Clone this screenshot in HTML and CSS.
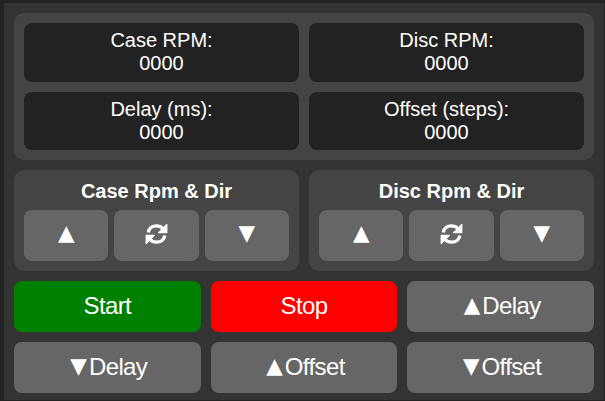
FILE: index.html
```html
<!DOCTYPE html>
<html lang="en">
<head>
<meta charset="utf-8">
<title>Controls</title>
<link rel="stylesheet" href="styles.css">
</head>
<body>
<svg width="0" height="0" class="defs"><symbol id="sync" viewBox="0 0 24 23" preserveAspectRatio="none"><path d="M3.4 10C4 5.6 7.6 3 12 3c2.7 0 5 1 6.8 2.9" fill="none" stroke="#fff" stroke-width="3.6"/><path d="M22.8 1.5v8.7H14.2z" stroke="#fff" stroke-width="1.2" stroke-linejoin="round"/><path d="M20.6 13c-.6 4.4-4.2 7-8.6 7-2.7 0-5-1-6.8-2.9" fill="none" stroke="#fff" stroke-width="3.6"/><path d="M1.2 21.5v-8.7H9.8z" stroke="#fff" stroke-width="1.2" stroke-linejoin="round"/></symbol></svg>
<main class="panel">
  <section class="status">
    <div class="readout">Case RPM:<br>0000</div>
    <div class="readout">Disc RPM:<br>0000</div>
    <div class="readout">Delay (ms):<br>0000</div>
    <div class="readout">Offset (steps):<br>0000</div>
  </section>
  <section class="groups">
    <div class="group">
      <h2>Case Rpm &amp; Dir</h2>
      <div class="group-buttons">
        <button><span class="arrow">▲</span></button>
        <button aria-label="Reverse"><svg class="icon"><use href="#sync"/></svg></button>
        <button><span class="arrow">▼</span></button>
      </div>
    </div>
    <div class="group">
      <h2>Disc Rpm &amp; Dir</h2>
      <div class="group-buttons">
        <button><span class="arrow">▲</span></button>
        <button aria-label="Reverse"><svg class="icon"><use href="#sync"/></svg></button>
        <button><span class="arrow">▼</span></button>
      </div>
    </div>
  </section>
  <section class="actions">
    <button class="start">Start</button>
    <button class="stop">Stop</button>
    <button class="step"><span class="arrow">▲</span>Delay</button>
    <button class="step"><span class="arrow">▼</span>Delay</button>
    <button class="step"><span class="arrow">▲</span>Offset</button>
    <button class="step"><span class="arrow">▼</span>Offset</button>
  </section>
</main>
</body>
</html>
```
FILE: styles.css
```css
* { box-sizing: border-box; }
body {
  margin: 0;
  padding: 3px 1px 0 4px;
  height: 401px;
  overflow: hidden;
  background: #222;
  color: #fff;
  font: 20px/23px "Liberation Sans", Arial, sans-serif;
}
.defs { position: absolute; }
.panel {
  display: flex;
  flex-direction: column;
  gap: 10px;
  height: 397px;
  padding: 10px;
  background: #333;
}
.status {
  display: grid;
  grid-template-columns: 1fr 1fr;
  grid-template-rows: 59px 58px;
  gap: 10px;
  padding: 10px;
  border-radius: 10px;
  background: #444;
}
.readout {
  padding-top: 6px;
  border-radius: 8px;
  background: #222;
  text-align: center;
}
.groups {
  display: grid;
  grid-template-columns: 1fr 1fr;
  gap: 10px;
}
.group {
  height: 101px;
  padding: 10px;
  border-radius: 10px;
  background: #444;
}
h2 {
  margin: 0 0 7px;
  font-size: 20px;
  line-height: 23px;
  text-align: center;
}
.group-buttons {
  display: grid;
  grid-template-columns: repeat(3, 1fr);
  gap: 6px;
}
.actions {
  display: grid;
  grid-template-columns: repeat(3, 1fr);
  gap: 10px;
}
button {
  display: block;
  height: 51px;
  padding: 0 0 2px;
  border: 0;
  border-radius: 8px;
  background: #666;
  color: #fff;
  font: 24px/27px "Liberation Sans", Arial, sans-serif;
  letter-spacing: -0.6px;
}
.step { padding-left: 3px; }
.start { background: #008000; }
.stop { background: #f00; }
.arrow {
  margin-right: 2px;
  font-family: "DejaVu Sans", sans-serif;
  font-size: 21.5px;
  line-height: 0;
  letter-spacing: 0;
  vertical-align: 2px;
}
.group-buttons .arrow {
  margin: 0;
  vertical-align: 3px;
}
.icon {
  display: block;
  width: 23px;
  height: 22px;
  margin: -1px auto 0;
  fill: #fff;
}
```
